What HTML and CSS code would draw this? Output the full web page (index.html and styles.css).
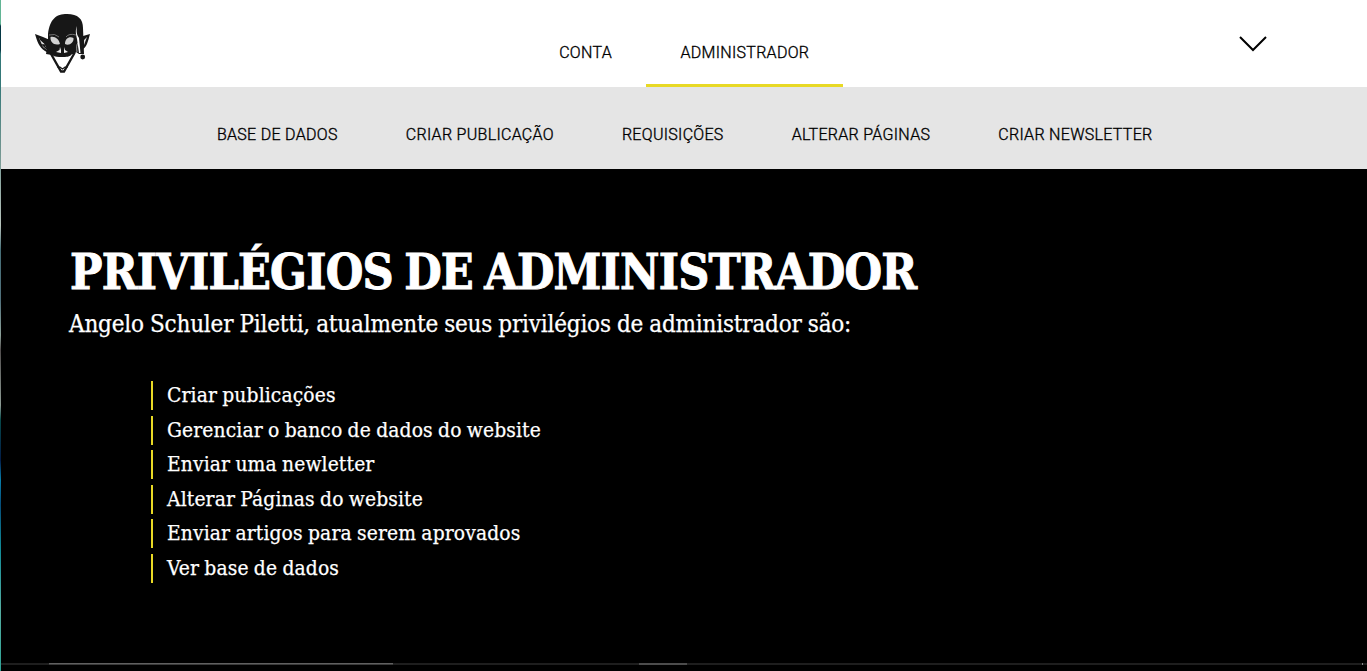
FILE: index.html
```html
<!DOCTYPE html>
<html lang="pt-BR">
<head>
<meta charset="utf-8">
<title>Privilégios de administrador</title>
<link rel="stylesheet" href="styles.css">
</head>
<body>
<div class="edge"></div>
<div class="page">
  <header class="header">
    <svg class="logo" viewBox="0 0 65 70" width="65" height="70">
      <path d="M5 26L13 29L20 32L20 46L15 43C9 39 7 33 5 26Z M60 26L53 28L51 35V42C57 40 58 33 60 26Z" fill="#171717"/>
      <path d="M9 30L15 36L17 42L13 39Z M57 29L54 32V37Z" fill="#ddd"/>
      <path d="M10 31L17 37L13 37L17 41" fill="none" stroke="#171717" stroke-width="1.6"/>
      <path d="M18 26C20 11 26 6 37 6C48 6 53 11 53 20L54 46H49L46 44L45 46L42 46C40 49 36 49 32 49C28 49 25 49 22 47L16 46L18 35Z" fill="#171717"/>
      <path d="M20.500 45L31 63.500H34L44.500 45" fill="none" stroke="#171717" stroke-width="2.300"/>
      <path d="M27 59H30L32.500 61L35 59H38" fill="none" stroke="#171717" stroke-width="1.200"/>
      <path d="M20.500 29C25 28 29 31 30 36C24 38 20 34 20.500 29Z M35 36C35 31 39 28 43.500 30C44 35 39 38 35 36Z" fill="#d2d2d2"/>
      <path d="M19 27Q25 25 29 29M36 29Q39 25 46 27" fill="none" stroke="#888" stroke-width=".8"/>
      <path d="M30 39L29.500 42L26 44L31 45V42ZM34 39L35 42L38 44L34 45V42Z" fill="#eee"/>
      <path d="M47 18C46 24 47 27 49 30L50.500 45H49L47 31C46 26 45 23 47 18Z" fill="#fff"/>
      <path d="M47 44Q46 37 48 35" fill="none" stroke="#ddd" stroke-width=".7"/>
      <circle cx="52.7" cy="49" r="2.4" fill="#171717"/>
    </svg>
    <nav class="nav">
      <a class="nav-item">CONTA</a>
      <a class="nav-item active">ADMINISTRADOR</a>
    </nav>
    <svg class="chevron" viewBox="0 0 28 17" width="28" height="17"><path d="M1 2L14 15L27 2" fill="none" stroke="#000" stroke-width="2"/></svg>
  </header>
  <nav class="subnav">
    <a class="nav-item">BASE DE DADOS</a>
    <a class="nav-item">CRIAR PUBLICAÇÃO</a>
    <a class="nav-item">REQUISIÇÕES</a>
    <a class="nav-item">ALTERAR PÁGINAS</a>
    <a class="nav-item">CRIAR NEWSLETTER</a>
  </nav>
  <main class="content">
    <h1 class="title">PRIVILÉGIOS DE ADMINISTRADOR</h1>
    <p class="intro">Angelo Schuler Piletti, atualmente seus privilégios de administrador são:</p>
    <ul class="list">
      <li>Criar publicações</li>
      <li>Gerenciar o banco de dados do website</li>
      <li>Enviar uma newletter</li>
      <li>Alterar Páginas do website</li>
      <li>Enviar artigos para serem aprovados</li>
      <li>Ver base de dados</li>
    </ul>
  </main>
  <footer class="strip"><span class="strip-long"></span><span class="strip-short"></span><span class="strip-end"></span></footer>
</div>
</body>
</html>
```
FILE: styles.css
```css
* { box-sizing: border-box; }
body { margin: 0; height: 671px; display: flex; overflow: hidden; background: #000; }
.edge {
  width: 1px; flex: none;
  background: linear-gradient(#62b595 0 24px, #053744 26px 50px, #347878 54px 85px, #719590 150px, #b8c4bd 225px, #476f78 250px, #51717c 300px, #8ca199 335px, #514d4d 350px, #8d9b94 405px, #07494a 420px, #031c48 460px, #087eaa 480px, #064d79 505px, #128c98 550px, #55aca0 610px, #2ea396 671px);
}
.page { flex: 1; display: flex; flex-direction: column; }
.header { height: 87px; background: #fff; display: grid; grid-template-columns: 1fr auto 1fr; }
.logo { margin: 8px 0 0 29px; }
.nav, .subnav { display: flex; justify-content: center; }
.nav-item {
  padding: 0 34px;
  font: 300 16px/20px Roboto, sans-serif;
  letter-spacing: .3px; color: #000; white-space: nowrap;
  -webkit-text-stroke: .35px #000;
}
.nav .nav-item { padding-top: 43px; }
.nav .active { border-bottom: 3px solid #e8d925; padding-left: 34.5px; padding-right: 33.5px; }
.chevron { justify-self: end; margin: 35px 100px 0 0; }
.subnav { height: 82px; background: #e5e5e5; padding: 38px 0 0 1.5px; }
.content { flex: 1; padding: 72px 68px 0; color: #fff; font-family: "DejaVu Serif Condensed", "DejaVu Serif", serif; font-stretch: condensed; -webkit-text-stroke: .25px #fff; }
.title { margin: 0; font-size: 48px; line-height: 62px; font-weight: 700; letter-spacing: -.78px; word-spacing: -3px; white-space: nowrap; -webkit-text-stroke: .9px #fff; padding-left: 1px; }
.intro { margin: 6px 0 0; font-size: 24px; line-height: 30px; white-space: nowrap; letter-spacing: -.2px; word-spacing: -.5px; }
.list { list-style: none; margin: 42px 0 0 82px; padding: 0; display: flex; flex-direction: column; gap: 5.6px; }
.list li { border-left: 2px solid #e8d925; height: 29px; padding-left: 14px; font-size: 20.8px; line-height: 28px; white-space: nowrap; letter-spacing: .13px; word-spacing: -.8px; }
.strip { height: 8px; display: flex; background: linear-gradient(#1e1e1e 0 2px, #000 2px); }
.strip span { height: 2px; background: #4c4c4c; }
.strip .strip-long { width: 344px; margin-left: 48px; background: linear-gradient(#606060 50%, #3a3a3a 50%); }
.strip .strip-short { width: 48px; margin-left: 246px; }
.strip .strip-end { width: 1px; margin-left: 675px; background: #888; }
```
